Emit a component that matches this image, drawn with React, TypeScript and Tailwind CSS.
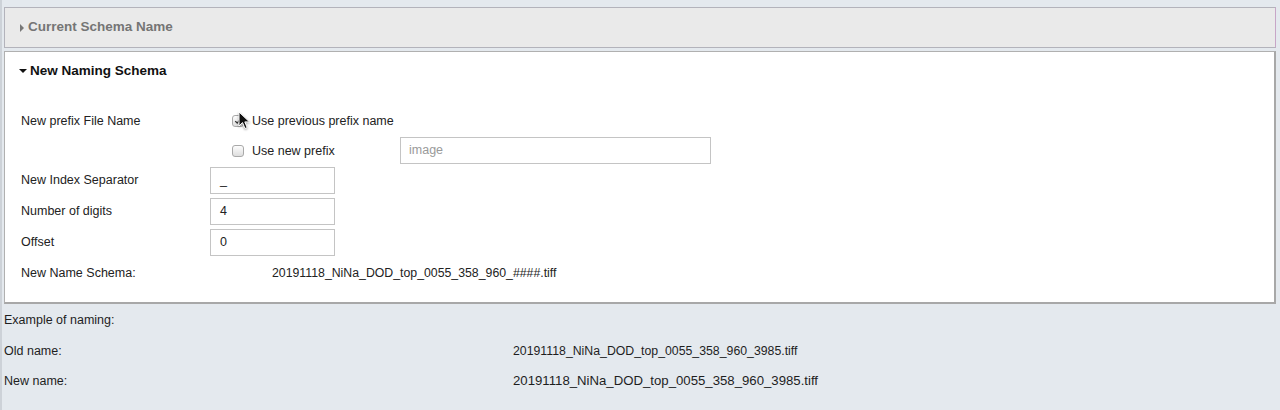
const font = { fontFamily: '"Liberation Sans", Arial, Helvetica, sans-serif' };

const Checkbox = ({ checked }: { checked?: boolean }) => (
  <span className="w-[12px] h-[12px] rounded-[3px] border border-[#a9a9a9] bg-gradient-to-b from-[#fdfdfd] to-[#dedede] flex items-center justify-center shrink-0">
    {checked && (
      <svg viewBox="0 0 10 10" className="w-[8px] h-[8px]">
        <path d="M1.5 5.2L4 7.6L8.5 2.2" stroke="#333" strokeWidth="1.6" fill="none" />
      </svg>
    )}
  </span>
);

const Cursor = () => (
  <svg viewBox="0 0 12 19" className="absolute left-[6px] top-[-4px] w-[12px] h-[19px] drop-shadow-[0_1px_1px_rgba(0,0,0,0.35)]">
    <path d="M1 1L1 15L4.5 11.6L7 17.5L9.2 16.6L6.8 10.9L11.5 10.9Z" fill="#111" stroke="#fff" strokeWidth="1" />
  </svg>
);

const TextBox = ({ value }: { value: string }) => (
  <div className="w-[125px] h-[27px] border border-[#c4c4c4] bg-white flex items-center px-[9px] text-[12.5px] text-[#222]">
    {value}
  </div>
);

export default function App() {
  return (
    <div style={font} className="w-full h-[410px] bg-[#e4e9ee] border-l-2 border-[#cdd2d8] pl-[2px] pr-[4px] pt-[7px] text-[#1e1e1e] overflow-hidden">
      {/* Current schema (collapsed) */}
      <div className="h-[41px] border border-[#b3b3bb] border-r-[#c7a6c7] bg-[#eaeaea] flex items-center pl-[15px] gap-[4px]">
        <span className="w-0 h-0 border-y-[4px] border-y-transparent border-l-[4px] border-l-[#777]" />
        <span className="text-[13.5px] font-bold text-[#757575]">Current Schema Name</span>
      </div>

      {/* New naming schema */}
      <div className="mt-[3px] h-[253px] border border-[#b0b0b0] border-r-2 border-b-2 border-r-[#a8a8a8] border-b-[#a8a8a8] bg-white">
        <div className="mt-[10px] h-[18px] flex items-center pl-[14px] gap-[3px]">
          <span className="w-0 h-0 border-x-[4px] border-x-transparent border-t-[4px] border-t-[#111]" />
          <span className="text-[13.5px] font-bold text-[#111]">New Naming Schema</span>
        </div>

        <div className="pl-[16px] text-[12.5px] text-[#222]">
          <div className="mt-[26px] h-[30px] flex items-center">
            <span className="w-[211px]">New prefix File Name</span>
            <span className="relative">
              <Checkbox checked />
              <Cursor />
            </span>
            <span className="ml-[8px]">Use previous prefix name</span>
          </div>
          <div className="h-[30px] flex items-center">
            <span className="w-[211px]" />
            <Checkbox />
            <span className="ml-[8px] w-[148px]">Use new prefix</span>
            <div className="w-[311px] h-[27px] -mt-[2px] border border-[#c4c4c4] bg-white flex items-center px-[8px] text-[#9a9a9a]">
              image
            </div>
          </div>

          <div className="mt-[1px] flex flex-col gap-[4px]">
            <div className="flex items-center">
              <span className="w-[189px]">New Index Separator</span>
              <TextBox value="_" />
            </div>
            <div className="flex items-center">
              <span className="w-[189px]">Number of digits</span>
              <TextBox value="4" />
            </div>
            <div className="flex items-center">
              <span className="w-[189px]">Offset</span>
              <TextBox value="0" />
            </div>
          </div>

          <div className="mt-[9px] h-[16px] flex items-center">
            <span className="w-[251px]">New Name Schema:</span>
            <span className="text-[12.3px]">20191118_NiNa_DOD_top_0055_358_960_####.tiff</span>
          </div>
        </div>
      </div>

      {/* Example */}
      <div className="mt-[1px] text-[12.5px] text-[#1e1e1e]">
        <div className="h-[30px] flex items-center">Example of naming:</div>
        <div className="mt-[1px] h-[30px] flex items-center">
          <span className="w-[509px]">Old name:</span>
          <span className="text-[12.3px]">20191118_NiNa_DOD_top_0055_358_960_3985.tiff</span>
        </div>
        <div className="h-[30px] flex items-center">
          <span className="w-[509px]">New name:</span>
          <span className="text-[13.2px]">20191118_NiNa_DOD_top_0055_358_960_3985.tiff</span>
        </div>
      </div>
    </div>
  );
}
